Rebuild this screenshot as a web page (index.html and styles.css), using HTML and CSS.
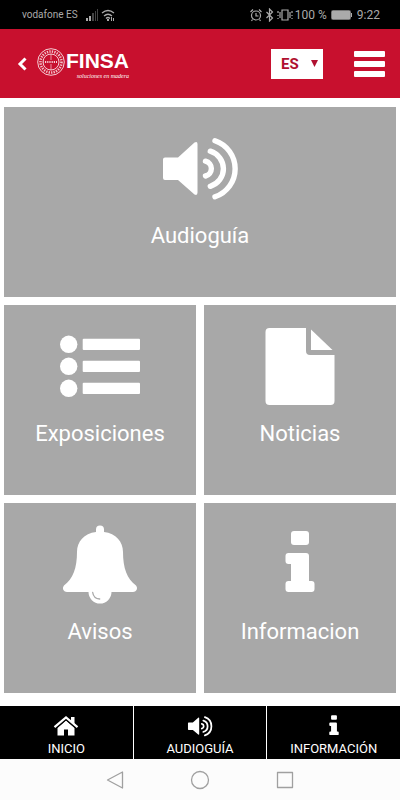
FILE: index.html
```html
<!DOCTYPE html>
<html lang="es">
<head>
<meta charset="utf-8">
<meta name="viewport" content="width=device-width, initial-scale=1">
<title>FINSA</title>
<link rel="stylesheet" href="styles.css">
</head>
<body>
<svg class="defs" aria-hidden="true">
  <symbol id="speaker" viewBox="0 0 80 80">
    <path fill="currentColor" d="M5 29.5H18L34.5 14.500Q37.500 13 37.500 16V64.500Q37.500 68 34.500 66.500L18 52H5Q3 52 3 50V31.500Q3 29.500 5 29.500Z"/>
    <path fill="none" stroke="currentColor" stroke-width="5.400" stroke-linecap="round" d="M45.500 33.200A7.600 7.600 0 0 1 45.500 48M50.300 23.200A18.300 18.300 0 0 1 50.300 58.300M55 12.700A29.600 29.600 0 0 1 55 68.800"/>
  </symbol>
  <symbol id="info" viewBox="0 0 80 80">
    <rect fill="currentColor" x="31" y="7" width="18" height="14" rx="3"/>
    <path fill="currentColor" d="M28.500 29H46Q49 29 49 32V57H51.500Q54.500 57 54.500 60V65Q54.500 68 51.500 68H28.500Q25.500 68 25.500 65V60Q25.500 57 28.500 57H31V40H28.500Q25.500 40 25.500 37V32Q25.500 29 28.500 29Z"/>
  </symbol>
</svg>

<div class="status">
  <span class="carrier">vodafone ES</span>
  <svg class="signal" width="30" height="14" viewBox="0 0 30 14" aria-hidden="true">
    <path fill="#aaa" d="M0 10h2v3H0zM3 8h2v5H3z"/>
    <path fill="#444" d="M6 5h2v8H6zM9 3h1v10H9zM11 1h1v12h-1z"/>
    <path fill="none" stroke="#aaa" stroke-width="1.300" d="M16 5Q22 0 28 5M18 8Q22 4.500 26 8M20 10.500Q22 8.500 24 10.500"/>
    <path fill="#aaa" d="M21 11h2v2h-2zM25 9h1v4h-1zM27 10h1v3h-1z"/>
  </svg>
  <svg class="indicators" width="44" height="14" viewBox="0 0 44 14" fill="none" stroke="#aaa" stroke-width="1.200" aria-hidden="true">
    <circle cx="6" cy="7.500" r="4.500"/>
    <path d="M6 5V8H8.500M.500 4L3 1.500M11.500 4L9 1.500M2.500 11.500L1.500 13M9.500 11.500L10.500 13"/>
    <path d="M16.500 4L22.500 10L19.500 13V1L22.500 4L16.500 10"/>
    <path d="M32 2H38V12H32ZM30 4V10M40 4V10M28 3V5M28 7V8M28 10V11M42 3V5M42 7V8M42 10V11"/>
  </svg>
  <span class="level">100 %</span>
  <svg class="battery" width="22" height="10" viewBox="0 0 22 10" aria-hidden="true">
    <rect x=".5" y=".5" width="19" height="9" rx="1" fill="none" stroke="#777"/>
    <path fill="#aaa" d="M1 1H19V9H1ZM20 3h1v4h-1z"/>
  </svg>
  <span class="clock">9:22</span>
</div>

<header class="header">
  <a class="back" href="#" aria-label="Volver">
    <svg width="10" height="14" viewBox="0 0 10 14" fill="none" stroke="currentColor" stroke-width="3"><path d="M8.500 1.500L3 7L8.500 12.500"/></svg>
  </a>
  <a class="brand" href="#">
    <svg class="seal" width="28" height="28" viewBox="0 0 28 28" fill="none" stroke="currentColor" aria-hidden="true">
      <circle cx="14" cy="14" r="13.300" stroke-width=".8"/>
      <circle cx="14" cy="14" r="10.500" stroke-width="2.600" stroke-dasharray="1.300 1.200" opacity=".75"/>
      <circle cx="14" cy="14" r="8" stroke-width=".8"/>
      <path stroke-width=".7" opacity=".8" d="M14 6V12M14 16V22M6 14H7"/>
      <path stroke-width="2" stroke-dasharray="1.200 1" opacity=".8" d="M8 14H20"/>
    </svg>
    <span class="wordmark">
      <span class="name">FINSA</span>
      <span class="slogan">soluciones en madera</span>
    </span>
  </a>
  <div class="language">
    <select aria-label="Idioma">
      <option>ES</option>
      <option>EN</option>
    </select>
    <svg class="caret" width="7" height="7" viewBox="0 0 7 7" aria-hidden="true"><path fill="currentColor" d="M0 0H7L3.500 7Z"/></svg>
  </div>
  <button class="menu" type="button" aria-label="Menú"><span></span><span></span><span></span></button>
</header>

<main class="tiles">
  <a class="tile wide" href="#">
    <svg class="icon" aria-hidden="true"><use href="#speaker"/></svg>
    <span>Audioguía</span>
  </a>
  <a class="tile" href="#">
    <svg class="icon" viewBox="0 0 80 80" fill="currentColor" aria-hidden="true">
      <circle cx="8.700" cy="18.300" r="8.700"/><circle cx="8.700" cy="40.300" r="8.700"/><circle cx="8.700" cy="62.300" r="8.700"/>
      <rect x="22.700" y="12.800" width="57.300" height="11.200" rx="1"/><rect x="22.700" y="34.800" width="57.300" height="11.200" rx="1"/><rect x="22.700" y="56.800" width="57.300" height="11.200" rx="1"/>
    </svg>
    <span>Exposiciones</span>
  </a>
  <a class="tile" href="#">
    <svg class="icon" viewBox="0 0 80 80" fill="currentColor" aria-hidden="true">
      <path d="M9.500 2H46V25Q46 29 50 29H74.500V75Q74.500 79 70.500 79H9.500Q5.500 79 5.500 75V6Q5.500 2 9.500 2Z"/>
      <path d="M51 3.500L72.500 24H51Z"/>
    </svg>
    <span>Noticias</span>
  </a>
  <a class="tile" href="#">
    <svg class="icon" viewBox="0 0 80 80" fill="currentColor" aria-hidden="true">
      <path d="M36 8V5.500A4 4 0 0 1 44 5.500V8C56 9 63 18 63 28C63 44 67 55 76 61.500C78.500 64.500 76 68 73 68H51.500A11.500 11.500 0 0 1 28.500 68H7C4 68 1.500 64.500 4 61.500C13 55 17 44 17 28C17 18 24 9 36 8Z"/>
      <path fill="none" stroke="#a8a8a8" stroke-width="1.300" stroke-linecap="round" d="M32.700 68.500Q33.500 74.500 39.700 75"/>
    </svg>
    <span>Avisos</span>
  </a>
  <a class="tile" href="#">
    <svg class="icon" aria-hidden="true"><use href="#info"/></svg>
    <span>Informacion</span>
  </a>
</main>

<nav class="tabs">
  <a href="#">
    <svg class="tab-icon" viewBox="0 0 26 26" fill="currentColor" aria-hidden="true">
      <path d="M4.500 15L13 7.500L21.500 15V22.500H15V16.500H11V22.500H4.500Z"/>
      <path fill="none" stroke="#000" stroke-width="1" d="M2.500 16L13 6.800L23.500 16"/>
      <path fill="none" stroke="currentColor" stroke-width="2.200" d="M1.500 14.200L13 4.500L24.500 14.200"/>
      <path d="M18 4H21.500V11L18 8Z"/>
    </svg>
    <span>INICIO</span>
  </a>
  <a href="#">
    <svg class="tab-icon" aria-hidden="true"><use href="#speaker"/></svg>
    <span>AUDIOGUÍA</span>
  </a>
  <a href="#">
    <svg class="tab-icon" aria-hidden="true"><use href="#info"/></svg>
    <span>INFORMACIÓN</span>
  </a>
</nav>

<div class="system">
  <button type="button" aria-label="Atrás"><svg width="20" height="20" viewBox="0 0 20 20"><path d="M17.500 2V18L2.500 10Z"/></svg></button>
  <button type="button" aria-label="Inicio"><svg width="20" height="20" viewBox="0 0 20 20"><circle cx="10" cy="10" r="8.500"/></svg></button>
  <button type="button" aria-label="Recientes"><svg width="20" height="20" viewBox="0 0 20 20"><rect x="2.500" y="2.500" width="15" height="15"/></svg></button>
</div>
</body>
</html>
```
FILE: styles.css
```css
* {
  box-sizing: border-box;
}

body {
  margin: 0;
  min-height: 100vh;
  display: flex;
  flex-direction: column;
  background: #fff;
  font-family: Roboto, "Liberation Sans", sans-serif;
}

a {
  color: inherit;
  text-decoration: none;
}

button {
  border: 0;
  padding: 0;
  background: none;
}

svg {
  display: block;
  flex: none;
}

.defs {
  position: absolute;
  width: 0;
  height: 0;
}

.status {
  display: flex;
  align-items: center;
  height: 29px;
  padding: 0 20px 0 22px;
  background: #000;
  color: #aaa;
  font-size: 12px;
  line-height: 16px;
}

.carrier {
  font-size: 10px;
}

.signal {
  margin-left: 8px;
}

.indicators {
  margin-left: auto;
}

.level {
  margin-left: 1px;
}

.battery {
  margin: 0 4px;
}

.header {
  display: flex;
  align-items: center;
  height: 69px;
  padding: 0 15px 0 17px;
  background: #c8102e;
  color: #fff;
}

.back {
  margin-right: 10px;
}

.brand {
  display: flex;
  align-items: flex-start;
  gap: 1px;
}

.wordmark {
  display: flex;
  flex-direction: column;
  align-items: flex-end;
}

.name {
  font: bold 21px/25px "Liberation Sans", sans-serif;
}

.slogan {
  font: italic 6px/6px "Liberation Serif", serif;
}

.language {
  position: relative;
  margin-left: auto;
  color: #b01030;
}

.language select {
  display: block;
  width: 52px;
  height: 30px;
  padding: 0 10px;
  appearance: none;
  border: 0;
  border-radius: 0;
  background: #fff;
  color: inherit;
  font: bold 15px/30px Roboto, sans-serif;
}

.caret {
  position: absolute;
  right: 5px;
  top: 11px;
  pointer-events: none;
}

.menu {
  display: flex;
  flex-direction: column;
  gap: 4px;
  margin-left: 31px;
}

.menu span {
  width: 31px;
  height: 6px;
  border-radius: 1px;
  background: #fff;
}

.tiles {
  flex: 1;
  display: grid;
  grid-template-columns: 1fr 1fr;
  grid-auto-rows: 1fr;
  gap: 8px;
  padding: 9px 4px 13px;
}

.tile {
  display: flex;
  flex-direction: column;
  align-items: center;
  gap: 14px;
  padding: 21px 0 44px;
  background: #a8a8a8;
  color: #fff;
  font-size: 22px;
  line-height: 28px;
}

.wide {
  grid-column: 1 / -1;
}

.icon {
  width: 80px;
  height: 80px;
}

.tabs {
  display: grid;
  grid-template-columns: repeat(3, 1fr);
  gap: 1px;
  background: #fff;
}

.tabs a {
  display: flex;
  flex-direction: column;
  align-items: center;
  gap: 1px;
  padding: 7px 0 2px;
  background: #000;
  color: #fff;
  font-size: 13px;
  line-height: 17px;
}

.tab-icon {
  width: 26px;
  height: 26px;
}

.system {
  display: flex;
  justify-content: center;
  align-items: center;
  gap: 65px;
  height: 41px;
  background: #fcfcfc;
}

.system svg {
  fill: none;
  stroke: #a0a0a0;
  stroke-width: 1.3;
  stroke-linejoin: round;
}
```
